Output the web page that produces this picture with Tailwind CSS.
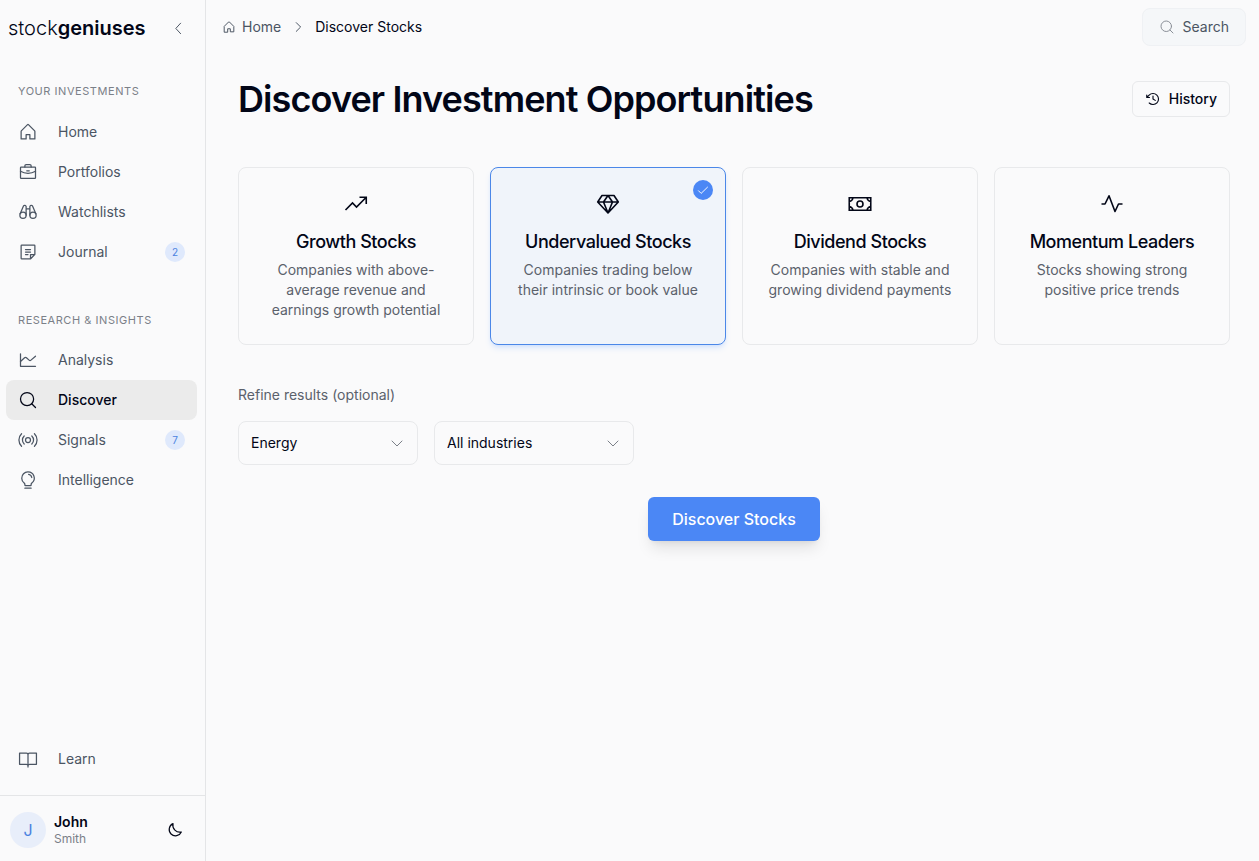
<!DOCTYPE html>
<html lang="en">
<head>
    <meta charset="UTF-8">
    <meta name="viewport" content="width=device-width, initial-scale=1.0">
    <title>Discover Stocks - stockgeniuses</title>
    <script src="https://cdn.jsdelivr.net/npm/@tailwindcss/browser@4"></script>
</head>
<body class="flex min-h-screen bg-[#fafafb] font-['Inter',sans-serif] text-sm text-[#020617]">

    <!-- Sidebar -->
    <aside class="flex w-[206px] shrink-0 flex-col border-r border-[#e4e5e7]">
        <div class="flex h-14 items-center justify-between pl-2 pr-5">
            <a href="#" class="text-xl"><span class="font-light">stock</span><span class="font-semibold">geniuses</span></a>
            <button type="button" aria-label="Collapse sidebar" class="text-[#4b5563]">
                <svg class="size-3.5" viewBox="0 0 256 256" fill="none" stroke="currentColor" stroke-width="18" stroke-linecap="round" stroke-linejoin="round"><path d="m176 40-88 96 88 96"/></svg>
            </button>
        </div>

        <nav class="flex flex-1 flex-col pl-1.5 pr-2 text-[#4b5563]">
            <h2 class="mt-6 px-3 text-[11px] leading-[22px] tracking-wider text-[#7b8088]">YOUR INVESTMENTS</h2>
            <ul class="mt-2.5">
                <li><a href="#" class="flex h-10 items-center gap-5 rounded-lg px-3">
                    <svg class="size-5" viewBox="0 0 256 256" fill="none" stroke="currentColor" stroke-width="16" stroke-linecap="round" stroke-linejoin="round"><path d="M104 216v-56h48v56h64v-96a8 8 0 0 0-2.300-5.700l-80-80a8 8 0 0 0-11.400 0l-80 80A8 8 0 0 0 40 120v96Z"/></svg>
                    Home</a></li>
                <li><a href="#" class="flex h-10 items-center gap-5 rounded-lg px-3">
                    <svg class="size-5" viewBox="0 0 256 256" fill="none" stroke="currentColor" stroke-width="16" stroke-linecap="round" stroke-linejoin="round"><rect x="32" y="64" width="192" height="144" rx="8"/><path d="M168 64V48a16 16 0 0 0-16-16h-48a16 16 0 0 0-16 16v16M224 118.300A191.100 191.100 0 0 1 128 144a191.100 191.100 0 0 1-96-25.700M112 112h32"/></svg>
                    Portfolios</a></li>
                <li><a href="#" class="flex h-10 items-center gap-5 rounded-lg px-3">
                    <svg class="size-5" viewBox="0 0 256 256" fill="none" stroke="currentColor" stroke-width="16" stroke-linecap="round" stroke-linejoin="round"><circle cx="64" cy="168" r="40"/><circle cx="192" cy="168" r="40"/><path d="M104 168V56M152 168V56M104 88h48M228.500 151.800 185.900 49.900a20 20 0 0 0-33.900 6.100M27.500 151.800 70.100 49.900a20 20 0 0 1 33.900 6.100"/></svg>
                    Watchlists</a></li>
                <li><a href="#" class="flex h-10 items-center gap-5 rounded-lg px-3">
                    <svg class="size-5" viewBox="0 0 256 256" fill="none" stroke="currentColor" stroke-width="16" stroke-linecap="round" stroke-linejoin="round"><path d="M96 96h64M96 128h64M96 160h32M156.700 216H48a8 8 0 0 1-8-8V48a8 8 0 0 1 8-8h160a8 8 0 0 1 8 8v108.700a8 8 0 0 1-2.300 5.600l-51.400 51.400a8 8 0 0 1-5.600 2.300ZM215.300 160H160v55.300"/></svg>
                    Journal
                    <span class="ml-auto flex size-5 items-center justify-center rounded-full bg-[#dfe9fc] text-[10px] text-[#4b83e0]">2</span></a></li>
            </ul>

            <h2 class="mt-[37px] px-3 text-[11px] leading-[22px] tracking-wider text-[#7b8088]">RESEARCH &amp; INSIGHTS</h2>
            <ul class="mt-[9px]">
                <li><a href="#" class="flex h-10 items-center gap-5 rounded-lg px-3">
                    <svg class="size-5" viewBox="0 0 256 256" fill="none" stroke="currentColor" stroke-width="16" stroke-linecap="round" stroke-linejoin="round"><path d="M224 208H32V48"/><path d="M32 148 84 100a18 18 0 0 1 24 0l34 30a18 18 0 0 0 24 0l58-50"/></svg>
                    Analysis</a></li>
                <li><a href="#" aria-current="page" class="flex h-10 items-center gap-5 rounded-lg bg-[#ebebeb] px-3 font-medium text-[#020617]">
                    <svg class="size-5" viewBox="0 0 256 256" fill="none" stroke="currentColor" stroke-width="16" stroke-linecap="round" stroke-linejoin="round"><circle cx="116" cy="116" r="84"/><path d="M175.400 175.400 224 224"/></svg>
                    Discover</a></li>
                <li><a href="#" class="flex h-10 items-center gap-5 rounded-lg px-3">
                    <svg class="size-5" viewBox="0 0 256 256" fill="none" stroke="currentColor" stroke-width="16" stroke-linecap="round" stroke-linejoin="round"><circle cx="128" cy="128" r="32"/><path d="M176.800 75.900a72 72 0 0 1 0 104.200M79.200 180.100a72 72 0 0 1 0-104.200M210.500 48a112 112 0 0 1 0 160M45.500 208a112 112 0 0 1 0-160"/></svg>
                    Signals
                    <span class="ml-auto flex size-5 items-center justify-center rounded-full bg-[#dfe9fc] text-[10px] text-[#4b83e0]">7</span></a></li>
                <li><a href="#" class="flex h-10 items-center gap-5 rounded-lg px-3">
                    <svg class="size-5" viewBox="0 0 256 256" fill="none" stroke="currentColor" stroke-width="16" stroke-linecap="round" stroke-linejoin="round"><path d="M88 232h80M78.700 167A79.900 79.900 0 0 1 48 104.500C47.800 61.100 82.700 25 126.100 24a80 80 0 0 1 51.300 142.900A24.300 24.300 0 0 0 168 186v6a8 8 0 0 1-8 8H96a8 8 0 0 1-8-8v-6a24.100 24.100 0 0 0-9.300-19ZM136 56c20 3.400 36.600 20 40 40"/></svg>
                    Intelligence</a></li>
            </ul>

            <a href="#" class="mb-4 mt-auto flex h-10 items-center gap-5 rounded-lg px-3">
                <svg class="size-5" viewBox="0 0 256 256" fill="none" stroke="currentColor" stroke-width="16" stroke-linejoin="round"><path d="M128 72a20 20 0 0 1 20-20h88v144h-88a20 20 0 0 0-20 20ZM20 196h88a20 20 0 0 1 20 20V72a20 20 0 0 0-20-20H20ZM128 210v26"/></svg>
                Learn</a>
        </nav>

        <!-- User -->
        <div class="flex h-[66px] items-center gap-2 border-t border-[#e4e5e7] pl-2.5 pr-[22px] pt-0.5">
            <span class="flex size-9 items-center justify-center rounded-full bg-[#e8eefa] text-base text-[#4b83e0]">J</span>
            <div>
                <p class="leading-[18px] font-semibold">John</p>
                <p class="text-xs text-[#7b8088]">Smith</p>
            </div>
            <button type="button" aria-label="Switch theme" class="ml-auto">
                <svg class="size-4" viewBox="0 0 24 24" fill="none" stroke="currentColor" stroke-width="1.800" stroke-linejoin="round"><path d="M9 2.500A9.500 9.500 0 1 0 21.500 15 10.500 10.500 0 0 1 9 2.500Z"/></svg>
            </button>
        </div>
    </aside>

    <!-- Page -->
    <div class="flex min-w-0 flex-1 flex-col">
        <header class="flex h-[54px] items-center justify-between pl-4 pr-[13px]">
            <nav aria-label="Breadcrumb" class="flex items-center gap-2.5">
                <a href="#" class="flex items-center gap-1.5 text-[#4b5563]">
                    <svg class="size-3.5" viewBox="0 0 256 256" fill="none" stroke="currentColor" stroke-width="18" stroke-linecap="round" stroke-linejoin="round"><path d="M104 216v-56h48v56h64v-96a8 8 0 0 0-2.300-5.700l-80-80a8 8 0 0 0-11.400 0l-80 80A8 8 0 0 0 40 120v96Z"/></svg>
                    Home</a>
                <svg class="size-3.5 text-[#4b5563]" viewBox="0 0 256 256" fill="none" stroke="currentColor" stroke-width="18" stroke-linecap="round" stroke-linejoin="round"><path d="m96 48 80 80-80 80"/></svg>
                <span>Discover Stocks</span>
            </nav>
            <button type="button" class="flex h-[38px] items-center gap-2 rounded-lg border border-[#eff1f4] bg-[#f5f7f9] px-4 text-[#4b5563]">
                <svg class="size-4 text-[#8b9098]" viewBox="0 0 256 256" fill="none" stroke="currentColor" stroke-width="16" stroke-linecap="round" stroke-linejoin="round"><circle cx="116" cy="116" r="84"/><path d="M175.400 175.400 224 224"/></svg>
                Search</button>
        </header>

        <main class="pl-8 pr-[29px] pt-[25px]">
            <div class="flex items-center justify-between">
                <h1 class="text-4xl font-semibold tracking-tight">Discover Investment Opportunities</h1>
                <button type="button" class="flex h-9 items-center gap-2 rounded-md border border-[#e8e9eb] px-3 font-medium">
                    <svg class="size-4" viewBox="0 0 256 256" fill="none" stroke="currentColor" stroke-width="18" stroke-linecap="round" stroke-linejoin="round"><path d="M128 80v48l36 22M72 104H28V64M67.600 192A88 88 0 1 0 65.800 65.800C54 77.600 42 90 28 104"/></svg>
                    History</button>
            </div>

            <div class="mt-12 grid grid-cols-4 gap-4">
                <button type="button" class="flex flex-col items-center rounded-lg border border-[#e8e9eb] p-6 text-center">
                    <svg class="size-6" viewBox="0 0 24 24" fill="none" stroke="currentColor" stroke-width="1.600"><path d="m1.500 18 7-7 4 4L22 5.500M15.500 5.250h6.750V12"/></svg>
                    <span class="mt-3 text-lg leading-7 font-medium tracking-tight">Growth Stocks</span>
                    <span class="mt-1 leading-5 text-[#5b616b]">Companies with above-average revenue and earnings growth potential</span>
                </button>
                <button type="button" aria-pressed="true" class="relative flex flex-col items-center rounded-lg border border-[#4b87e8] bg-[#f0f4fa] p-6 text-center shadow-md shadow-blue-500/15">
                    <span class="absolute right-3 top-3 flex size-5 items-center justify-center rounded-full bg-[#4b87f5] text-white">
                        <svg class="size-3" viewBox="0 0 256 256" fill="none" stroke="currentColor" stroke-width="20" stroke-linecap="round" stroke-linejoin="round"><path d="m32 144 56 56L224 68"/></svg>
                    </span>
                    <svg class="size-6" viewBox="0 0 24 24" fill="none" stroke="currentColor" stroke-width="1.600" stroke-linejoin="round"><path d="M6 3.500h12L22.300 10 12 21 1.700 10ZM1.700 10h20.600M12 3.500 7.500 10 12 21l4.500-11Z"/></svg>
                    <span class="mt-3 text-lg leading-7 font-medium tracking-tight">Undervalued Stocks</span>
                    <span class="mt-1 leading-5 text-[#5b616b]">Companies trading below their intrinsic or book value</span>
                </button>
                <button type="button" class="flex flex-col items-center rounded-lg border border-[#e8e9eb] p-6 text-center">
                    <svg class="size-6" viewBox="0 0 24 24" fill="none" stroke="currentColor" stroke-width="1.600"><path d="M1.250 5.750h21.500v12.500H1.250ZM1.250 9.500A4.500 4.500 0 0 0 5 5.750M19 5.750a4.500 4.500 0 0 0 3.750 3.750M1.250 14.500A4.500 4.500 0 0 1 5 18.250M19 18.250a4.500 4.500 0 0 1 3.750-3.750"/><circle cx="12" cy="12" r="3"/></svg>
                    <span class="mt-3 text-lg leading-7 font-medium tracking-tight">Dividend Stocks</span>
                    <span class="mt-1 leading-5 text-[#5b616b]">Companies with stable and growing dividend payments</span>
                </button>
                <button type="button" class="flex flex-col items-center rounded-lg border border-[#e8e9eb] p-6 text-center">
                    <svg class="size-6" viewBox="0 0 24 24" fill="none" stroke="currentColor" stroke-width="1.600" stroke-linejoin="round"><path d="M1.500 12H5L9 3.800l6 15.700 3.500-7.500h4"/></svg>
                    <span class="mt-3 text-lg leading-7 font-medium tracking-tight">Momentum Leaders</span>
                    <span class="mt-1 leading-5 text-[#5b616b]">Stocks showing strong positive price trends</span>
                </button>
            </div>

            <!-- Filters -->
            <p class="mt-10 text-[#5b616b]">Refine results (optional)</p>
            <div class="mt-4 flex gap-4">
                <div class="relative w-[180px]">
                    <select aria-label="Sector" class="h-11 w-full appearance-none rounded-lg border border-[#e8e9eb] px-3">
                        <option>Energy</option>
                    </select>
                    <svg class="pointer-events-none absolute right-[13px] top-3.5 size-4 text-[#7b8088]" viewBox="0 0 256 256" fill="none" stroke="currentColor" stroke-width="16" stroke-linecap="round" stroke-linejoin="round"><path d="m208 96-80 80-80-80"/></svg>
                </div>
                <div class="relative w-[200px]">
                    <select aria-label="Industry" class="h-11 w-full appearance-none rounded-lg border border-[#e8e9eb] px-3">
                        <option>All industries</option>
                    </select>
                    <svg class="pointer-events-none absolute right-[13px] top-3.5 size-4 text-[#7b8088]" viewBox="0 0 256 256" fill="none" stroke="currentColor" stroke-width="16" stroke-linecap="round" stroke-linejoin="round"><path d="m208 96-80 80-80-80"/></svg>
                </div>
            </div>

            <div class="mt-8 flex justify-center">
                <button type="button" class="h-11 rounded-md bg-[#4b87f5] px-6 text-base font-medium text-white shadow-lg">Discover Stocks</button>
            </div>
        </main>
    </div>
</body>
</html>
